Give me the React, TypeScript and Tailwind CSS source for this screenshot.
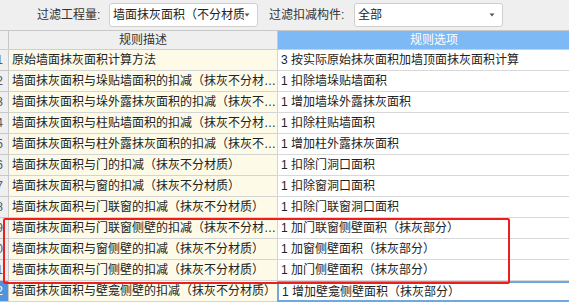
import React from 'react';

const rows: [string, string][] = [
  ['原始墙面抹灰面积计算方法', '3 按实际原始抹灰面积加墙顶面抹灰面积计算'],
  ['墙面抹灰面积与垛贴墙面积的扣减（抹灰不分材质）', '1 扣除墙垛贴墙面积'],
  ['墙面抹灰面积与垛外露抹灰面积的扣减（抹灰不分材质）', '1 增加墙垛外露抹灰面积'],
  ['墙面抹灰面积与柱贴墙面积的扣减（抹灰不分材质）', '1 扣除柱贴墙面积'],
  ['墙面抹灰面积与柱外露抹灰面积的扣减（抹灰不分材质）', '1 增加柱外露抹灰面积'],
  ['墙面抹灰面积与门的扣减（抹灰不分材质）', '1 扣除门洞口面积'],
  ['墙面抹灰面积与窗的扣减（抹灰不分材质）', '1 扣除窗洞口面积'],
  ['墙面抹灰面积与门联窗的扣减（抹灰不分材质）', '1 扣除门联窗洞口面积'],
  ['墙面抹灰面积与门联窗侧壁的扣减（抹灰不分材质）', '1 加门联窗侧壁面积（抹灰部分）'],
  ['墙面抹灰面积与窗侧壁的扣减（抹灰不分材质）', '1 加窗侧壁面积（抹灰部分）'],
  ['墙面抹灰面积与门侧壁的扣减（抹灰不分材质）', '1 加门侧壁面积（抹灰部分）'],
  ['墙面抹灰面积与壁龛侧壁的扣减（抹灰不分材质）', '1 增加壁龛侧壁面积（抹灰部分）'],
];

const Caret = () => (
  <svg width="6" height="4" viewBox="0 0 6 4" className="shrink-0">
    <path d="M0.5 0.5 L5.5 0.5 L3 3.5 Z" fill="#555" />
  </svg>
);

const FilterSelect = ({ value }: { value: string }) => (
  <div className="flex items-center shrink-0 w-[149px] h-[24px] bg-white border border-[#cfcfcf] rounded-[3px] pl-[3px] pr-[7px]">
    <span className="flex-1 overflow-hidden whitespace-nowrap text-[12px] text-[#222]">{value}</span>
    <Caret />
  </div>
);

const App = () => {
  return (
    <div className="relative w-[569px] h-[305px] overflow-hidden bg-white font-['Liberation_Sans','Noto_Sans_CJK_SC',sans-serif]">
      <div className="flex items-center h-[31px] bg-[#efefef] border-b border-[#c8c8c8] pl-[37px]">
        <span className="w-[72px] shrink-0 text-[12px] text-[#333]">过滤工程量:</span>
        <FilterSelect value="墙面抹灰面积（不分材质）" />
        <span className="w-[85px] shrink-0 ml-[11px] text-[12px] text-[#333]">过滤扣减构件:</span>
        <FilterSelect value="全部" />
      </div>

      <div className="flex flex-col w-[590px]">
        <div className="flex h-[19px] border-b border-[#cfcfcf] text-[12px]">
          <div className="w-[9px] shrink-0 bg-[#efefef] border-r border-[#c8c8c8]" />
          <div className="w-[269px] shrink-0 flex items-center justify-center bg-[#efefef] border-r border-[#c8c8c8] text-[#333]">
            规则描述
          </div>
          <div className="w-[312px] shrink-0 flex items-center justify-center bg-[#7cb9f5] text-white">规则选项</div>
        </div>

        {rows.map(([desc, opt], i) => {
          const current = i === rows.length - 1;
          return (
            <div key={i} className="flex h-[21px] text-[12px]">
              <div
                className={`w-[9px] shrink-0 flex items-center justify-end overflow-hidden pr-[5px] border-r border-b border-[#c8c8c8] ${
                  current ? 'bg-[#4f94dc] text-white' : 'bg-[#efefef] text-[#555]'
                }`}
              >
                <span className="shrink-0">{i + 1}</span>
              </div>
              <div className="w-[269px] shrink-0 flex items-center pl-[3px] bg-[#fdfbe7] border-r border-b border-[#d4d4d4] text-[#222]">
                <span className="truncate shrink-0 w-[273px]">{desc}</span>
              </div>
              <div
                className={`relative w-[312px] shrink-0 flex items-center pl-[3px] whitespace-nowrap text-[#222] ${
                  current ? 'border-y-2 border-l-2 border-[#6ea8e0] -ml-px' : 'border-b border-[#d8d8d8] bg-white'
                }`}
              >
                {opt}
              </div>
            </div>
          );
        })}
      </div>

      <div className="absolute left-[3px] top-[218px] w-[507px] h-[66px] border-[2.5px] border-[#f01d1d] rounded-[2px]" />
    </div>
  );
};

export default App;
